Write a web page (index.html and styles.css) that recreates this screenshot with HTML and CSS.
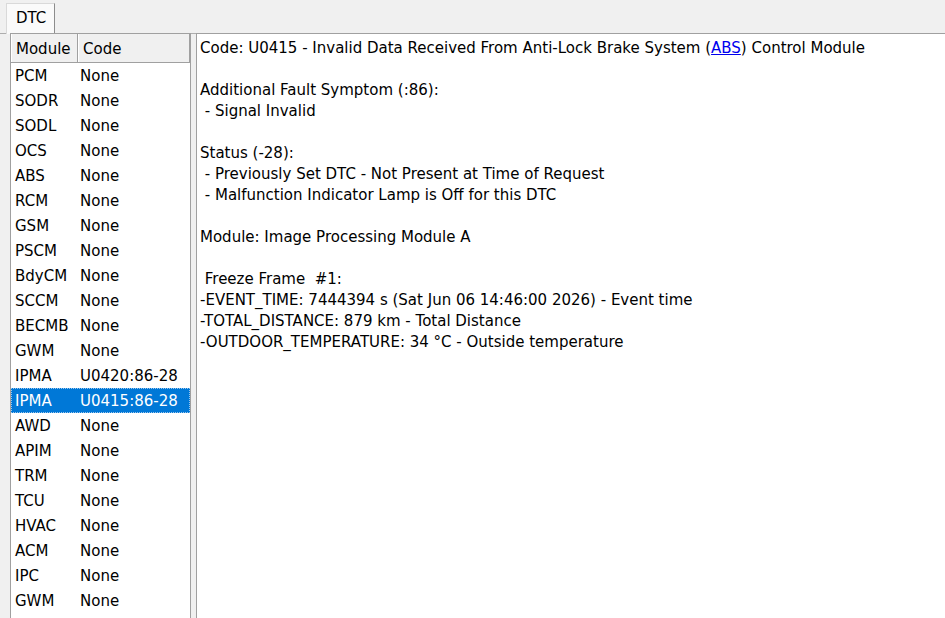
FILE: index.html
```html
<!DOCTYPE html>
<html lang="en">

<head>
    <meta charset="UTF-8">
    <title>DTC</title>
    <link rel="stylesheet" href="styles.css">
</head>

<body>
    <div class="tabs">
        <div class="tab">DTC</div>
    </div>

    <div class="page">
        <!-- Lista de modulos -->
        <div class="list">
            <div class="list-head">
                <div class="col-module">Module</div>
                <div class="col-code">Code</div>
            </div>
            <div class="row"><span class="col-module">PCM</span><span class="col-code">None</span></div>
            <div class="row"><span class="col-module">SODR</span><span class="col-code">None</span></div>
            <div class="row"><span class="col-module">SODL</span><span class="col-code">None</span></div>
            <div class="row"><span class="col-module">OCS</span><span class="col-code">None</span></div>
            <div class="row"><span class="col-module">ABS</span><span class="col-code">None</span></div>
            <div class="row"><span class="col-module">RCM</span><span class="col-code">None</span></div>
            <div class="row"><span class="col-module">GSM</span><span class="col-code">None</span></div>
            <div class="row"><span class="col-module">PSCM</span><span class="col-code">None</span></div>
            <div class="row"><span class="col-module">BdyCM</span><span class="col-code">None</span></div>
            <div class="row"><span class="col-module">SCCM</span><span class="col-code">None</span></div>
            <div class="row"><span class="col-module">BECMB</span><span class="col-code">None</span></div>
            <div class="row"><span class="col-module">GWM</span><span class="col-code">None</span></div>
            <div class="row"><span class="col-module">IPMA</span><span class="col-code">U0420:86-28</span></div>
            <div class="row selected"><span class="col-module">IPMA</span><span class="col-code">U0415:86-28</span></div>
            <div class="row"><span class="col-module">AWD</span><span class="col-code">None</span></div>
            <div class="row"><span class="col-module">APIM</span><span class="col-code">None</span></div>
            <div class="row"><span class="col-module">TRM</span><span class="col-code">None</span></div>
            <div class="row"><span class="col-module">TCU</span><span class="col-code">None</span></div>
            <div class="row"><span class="col-module">HVAC</span><span class="col-code">None</span></div>
            <div class="row"><span class="col-module">ACM</span><span class="col-code">None</span></div>
            <div class="row"><span class="col-module">IPC</span><span class="col-code">None</span></div>
            <div class="row"><span class="col-module">GWM</span><span class="col-code">None</span></div>
        </div>

        <!-- Detalle del codigo -->
        <div class="detail">
            <p>Code: U0415 - Invalid Data Received From Anti-Lock Brake System (<a href="#">ABS</a>) Control Module</p>
            <p>&nbsp;</p>
            <p>Additional Fault Symptom (:86):</p>
            <p>&nbsp;- Signal Invalid</p>
            <p>&nbsp;</p>
            <p>Status (-28):</p>
            <p>&nbsp;- Previously Set DTC - Not Present at Time of Request</p>
            <p>&nbsp;- Malfunction Indicator Lamp is Off for this DTC</p>
            <p>&nbsp;</p>
            <p>Module: Image Processing Module A</p>
            <p>&nbsp;</p>
            <p>&nbsp;Freeze Frame &nbsp;#1:</p>
            <p>-EVENT_TIME: 7444394 s (Sat Jun 06 14:46:00 2026) - Event time</p>
            <p>-TOTAL_DISTANCE: 879 km - Total Distance</p>
            <p>-OUTDOOR_TEMPERATURE: 34 &deg;C - Outside temperature</p>
        </div>
    </div>
</body>

</html>
```

FILE: styles.css
```css
/* Estilos generales */
body {
    font-family: "DejaVu Sans", sans-serif;
    font-size: 15px;
    color: #000;
    background-color: #f0f0f0;
    margin: 0;
    padding: 0;
    height: 618px;
    overflow: hidden;
}

/* Pestanas */
.tabs {
    height: 34px;
    padding-left: 6px;
    box-sizing: border-box;
    border-bottom: 1px solid #adadad;
    display: flex;
    align-items: flex-end;
}

.tab {
    width: 49px;
    height: 31px;
    margin-bottom: -1px;
    box-sizing: border-box;
    border: 1px solid #d9d9d9;
    border-right-color: #8c8c8c;
    border-bottom: none;
    background-color: #fafafa;
    padding: 5px 0 0 9px;
}

.page {
    display: flex;
    height: 584px;
    padding-left: 10px;
}

/* Lista */
.list {
    width: 181px;
    box-sizing: border-box;
    border: 1px solid #a0a0a0;
    border-bottom: none;
    background-color: #fff;
    margin-top: -1px;
}

.list-head {
    display: flex;
    height: 29px;
    box-sizing: border-box;
    background-color: #f0f0f0;
    border-bottom: 1px solid #a0a0a0;
}

.list-head div {
    box-sizing: border-box;
    border-right: 1px solid #a0a0a0;
    border-left: 1px solid #fff;
    padding: 6px 0 0 4px;
}

.list-head .col-module {
    width: 67px;
}

.list-head .col-code {
    width: 112px;
}

.row {
    display: flex;
    height: 25px;
    padding-top: 2px;
    line-height: 23px;
    box-sizing: border-box;
}

.row .col-module {
    width: 65px;
    padding-left: 4px;
}

.row.selected {
    background-color: #0078d7;
    color: #fff;
    outline: 1px dotted #9cc7ee;
    outline-offset: -1px;
}

/* Detalle */
.detail {
    flex: 1;
    margin-left: 5px;
    margin-top: -1px;
    background-color: #fff;
    border-top: 1px solid #a0a0a0;
    border-left: 1px solid #a0a0a0;
    padding: 4px 0 0 3px;
}

.detail p {
    margin: 0;
    line-height: 21px;
    white-space: pre;
}

.detail a {
    color: #0000ee;
}
```
